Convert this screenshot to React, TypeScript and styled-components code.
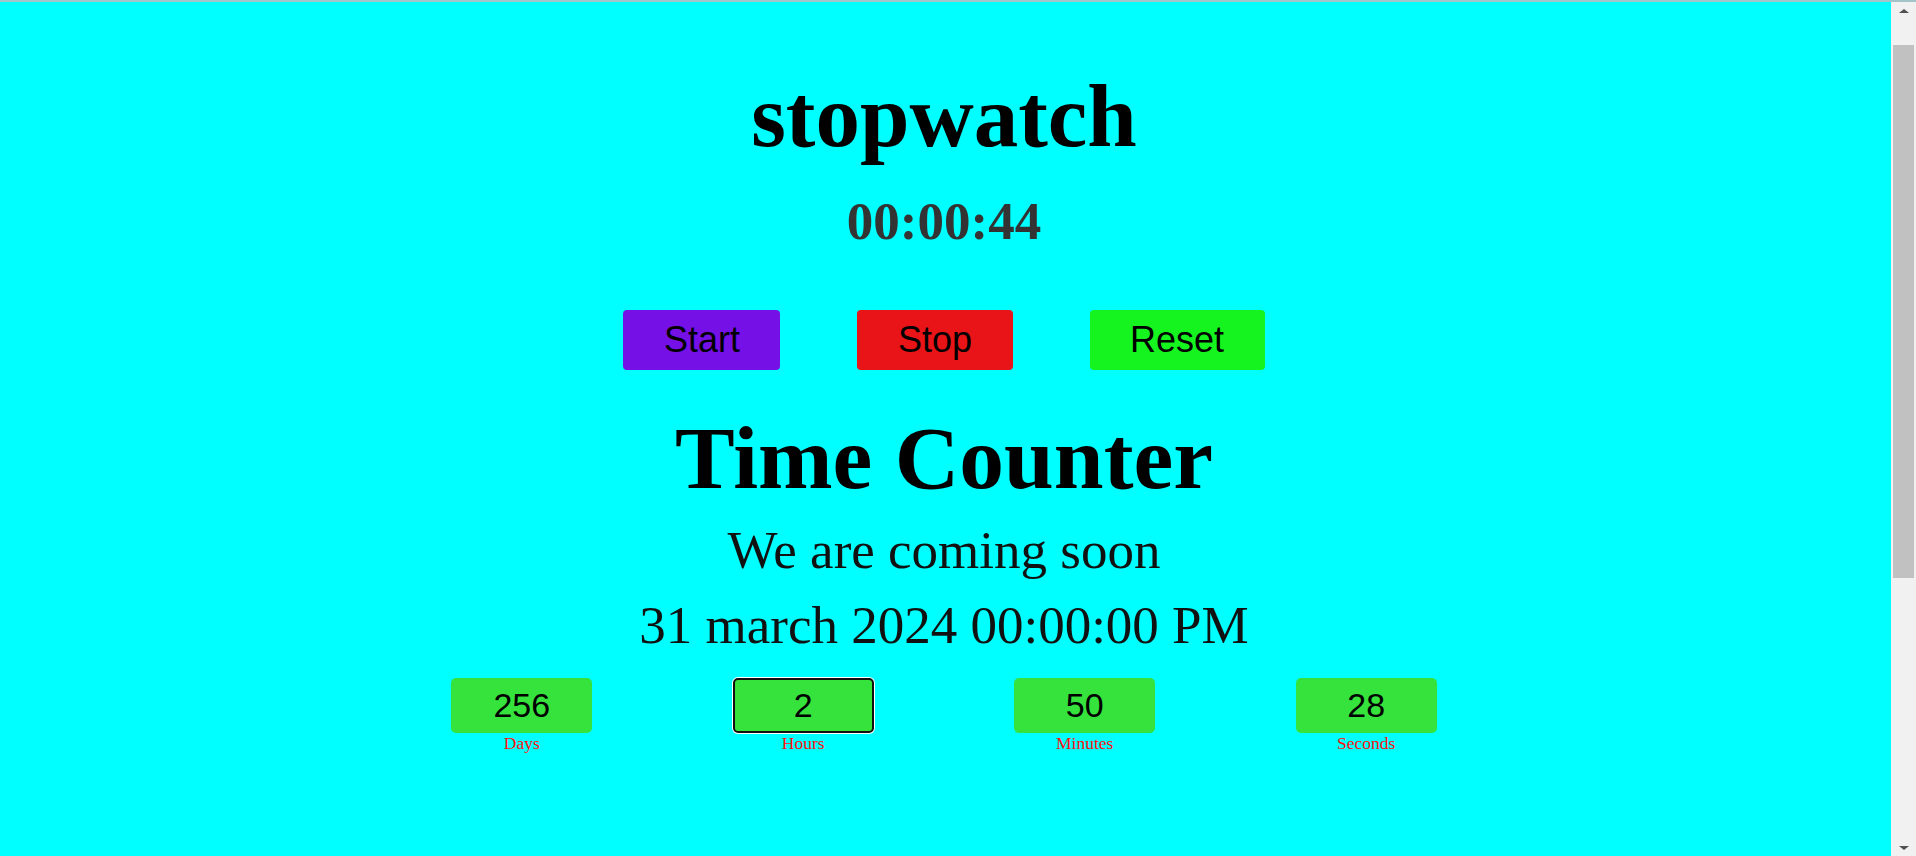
import React from "react";
import styled, { createGlobalStyle } from "styled-components";

const GlobalStyle = createGlobalStyle`
  html, body {
    margin: 0;
    padding: 0;
    height: 100%;
    overflow: hidden;
  }
  body {
    background: #00ffff;
    font-family: "Liberation Serif", "Times New Roman", serif;
  }
  #root {
    height: 100%;
  }
`;

const Frame = styled.div`
  height: 856px;
  display: flex;
  flex-direction: column;
  border-top: 2px solid #a3c4c8;
  box-sizing: border-box;
`;

const Body = styled.div`
  flex: 1;
  display: flex;
  min-height: 0;
`;

const Main = styled.main`
  flex: 1;
  display: flex;
  flex-direction: column;
  align-items: center;
  padding-top: 64px;
  padding-right: 3px;
  background: #00ffff;
`;

const Title = styled.h1`
  margin: 0;
  font-family: "Liberation Serif", "Times New Roman", serif;
  font-size: 89px;
  line-height: 100px;
  font-weight: 700;
  color: #000;
`;

const Clock = styled.h2`
  margin: 25px 0 0;
  font-family: "Liberation Serif", "Times New Roman", serif;
  font-size: 53px;
  line-height: 60px;
  font-weight: 700;
  color: #333;
`;

const ButtonRow = styled.div`
  display: flex;
  gap: 77px;
  margin-top: 59px;
`;

const ActionButton = styled.button<{ $bg: string }>`
  height: 60px;
  box-sizing: border-box;
  padding: 0 40.5px;
  border: none;
  border-radius: 4px;
  background: ${(p) => p.$bg};
  color: #000;
  font-family: "Liberation Sans", Arial, sans-serif;
  font-size: 36px;
  line-height: 60px;
  cursor: pointer;
`;

const CounterTitle = styled.h1`
  margin: 38px 0 0;
  font-family: "Liberation Serif", "Times New Roman", serif;
  font-size: 89.5px;
  line-height: 100px;
  font-weight: 700;
  color: #000;
`;

const Line = styled.p<{ $mt: number }>`
  margin: ${(p) => p.$mt}px 0 0;
  font-family: "Liberation Serif", "Times New Roman", serif;
  font-size: 53px;
  line-height: 60px;
  font-weight: 400;
  color: #111;
`;

const CounterGrid = styled.div`
  display: grid;
  grid-template-columns: repeat(4, 141px);
  column-gap: 140.5px;
  margin-top: 23px;
`;

const Unit = styled.div`
  display: flex;
  flex-direction: column;
  align-items: center;
`;

const ValueBox = styled.div<{ $focused?: boolean }>`
  width: 141px;
  height: 55px;
  box-sizing: border-box;
  border: 2px solid ${(p) => (p.$focused ? "#101010" : "transparent")};
  box-shadow: ${(p) => (p.$focused ? "0 0 0 1px #ffffff" : "none")};
  border-radius: 5px;
  background: #35e33c;
  color: #000;
  font-family: "Liberation Sans", Arial, sans-serif;
  font-size: 34px;
  line-height: 51px;
  text-align: center;
`;

const UnitLabel = styled.span`
  font-family: "Liberation Serif", "Times New Roman", serif;
  font-size: 17.5px;
  line-height: 20px;
  color: #ff1010;
`;

const Rail = styled.div`
  width: 25px;
  background: #f1f1f1;
  display: flex;
  flex-direction: column;
`;

const RailButton = styled.div`
  height: 17px;
  display: flex;
  align-items: center;
  justify-content: center;
`;

const Arrow = styled.span<{ $dir: "up" | "down" }>`
  width: 0;
  height: 0;
  border-left: 5px solid transparent;
  border-right: 5px solid transparent;
  ${(p) =>
    p.$dir === "up"
      ? "border-bottom: 4px solid #505050;"
      : "border-top: 4px solid #505050;"}
`;

const Track = styled.div`
  flex: 1;
  padding: 0 2px;
  display: flex;
  flex-direction: column;
`;

const Thumb = styled.div`
  margin-top: 26px;
  height: 533px;
  background: #c1c1c1;
`;

const units = [
  { value: "256", label: "Days" },
  { value: "2", label: "Hours", focused: true },
  { value: "50", label: "Minutes" },
  { value: "28", label: "Seconds" },
];

export default function App() {
  return (
    <>
      <GlobalStyle />
      <Frame>
        <Body>
          <Main>
            <Title>stopwatch</Title>
            <Clock>00:00:44</Clock>
            <ButtonRow>
              <ActionButton $bg="#7511e6">Start</ActionButton>
              <ActionButton $bg="#e91418">Stop</ActionButton>
              <ActionButton $bg="#15f41f">Reset</ActionButton>
            </ButtonRow>
            <CounterTitle>Time Counter</CounterTitle>
            <Line $mt={12}>We are coming soon</Line>
            <Line $mt={15}>31 march 2024 00:00:00 PM</Line>
            <CounterGrid>
              {units.map((u) => (
                <Unit key={u.label}>
                  <ValueBox $focused={u.focused}>{u.value}</ValueBox>
                  <UnitLabel>{u.label}</UnitLabel>
                </Unit>
              ))}
            </CounterGrid>
          </Main>
          <Rail>
            <RailButton>
              <Arrow $dir="up" />
            </RailButton>
            <Track>
              <Thumb />
            </Track>
            <RailButton>
              <Arrow $dir="down" />
            </RailButton>
          </Rail>
        </Body>
      </Frame>
    </>
  );
}
